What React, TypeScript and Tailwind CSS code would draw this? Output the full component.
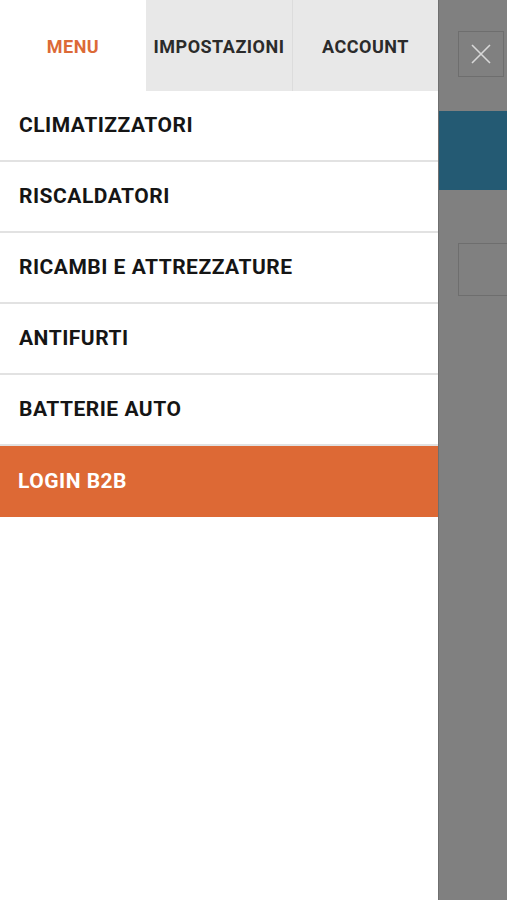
import React from "react";

const items = ["CLIMATIZZATORI", "RISCALDATORI", "RICAMBI E ATTREZZATURE", "ANTIFURTI", "BATTERIE AUTO"];

export default function App() {
  return (
    <div className="flex w-[507px] h-[900px] overflow-hidden" style={{ fontFamily: "Roboto, 'Liberation Sans', sans-serif" }}>
      <div className="w-[438px] shrink-0 bg-white flex flex-col">
        <div className="flex h-[91px]">
          <div className="w-[146px] flex items-center justify-center pt-[1px] bg-white text-[#dc6a37] text-[18px] font-bold tracking-[0.5px]">MENU</div>
          <div className="w-[147px] flex items-center justify-center pt-[1px] bg-[#e8e8e8] text-[#2b2b2b] text-[18px] font-bold tracking-[0.5px] border-r border-[#dcdcdc]">IMPOSTAZIONI</div>
          <div className="flex-1 flex items-center justify-center pt-[1px] bg-[#e8e8e8] text-[#2b2b2b] text-[18px] font-bold tracking-[0.5px]">ACCOUNT</div>
        </div>
        {items.map((t) => (
          <div key={t} className="h-[71px] flex items-center pl-[19px] pt-[1px] border-b-2 border-[#e2e2e2] text-[21px] font-bold tracking-[0.5px] text-[#151515]">
            {t}
          </div>
        ))}
        <div className="h-[71px] flex items-center pl-[18px] bg-[#dd6935] text-white text-[21px] font-bold tracking-[0.5px]">LOGIN B2B</div>
      </div>
      <div className="flex-1 bg-[#808080] flex flex-col border-l border-[#6f6f6f]">
        <div className="h-[111px] pt-[31px] pl-[19px]">
          <div className="w-[46px] h-[46px] border border-[#6e6e6e] flex items-center justify-center">
            <svg width="22" height="22" viewBox="0 0 22 22" fill="none" stroke="#d8d8d8" strokeWidth="1.6">
              <path d="M2 2L20 20M20 2L2 20" />
            </svg>
          </div>
        </div>
        <div className="h-[79px] bg-[#245a73]" />
        <div className="pt-[53px] pl-[19px]">
          <div className="h-[53px] border border-[#6e6e6e] border-r-0" />
        </div>
      </div>
    </div>
  );
}
